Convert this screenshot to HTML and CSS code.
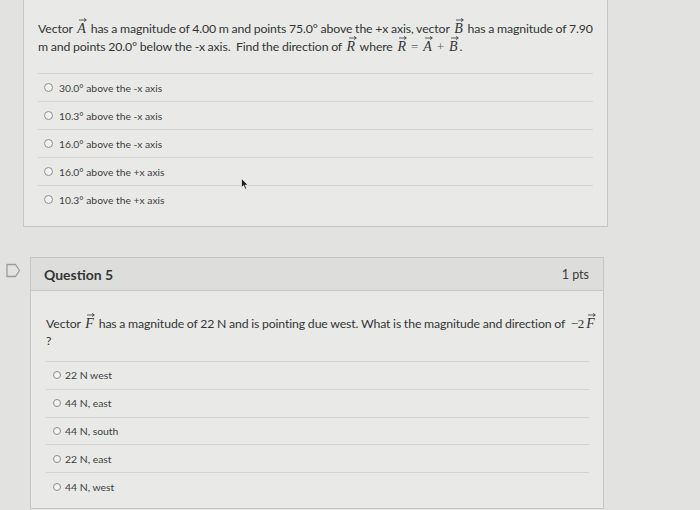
FILE: index.html
```html
<!DOCTYPE html>
<html lang="en">
<head>
<meta charset="utf-8">
<link rel="stylesheet" href="styles.css">
</head>
<body>
<div class="page">
  <div class="card card-prev">
    <p class="qtext">Vector <span class="vec">A<svg class="arr" viewBox="0 0 8 4"><path d="M0 2 H7 M5 0.4 L7.4 2 L5 3.6" fill="none" stroke="currentColor" stroke-width="0.8"/></svg></span> has a magnitude of 4.00 m and points 75.0° above the +x axis, vector <span class="vec">B<svg class="arr" viewBox="0 0 8 4"><path d="M0 2 H7 M5 0.4 L7.4 2 L5 3.6" fill="none" stroke="currentColor" stroke-width="0.8"/></svg></span> has a magnitude of 7.90 m and points 20.0° below the -x axis.&nbsp; Find the direction of <span class="vec">R<svg class="arr" viewBox="0 0 8 4"><path d="M0 2 H7 M5 0.4 L7.4 2 L5 3.6" fill="none" stroke="currentColor" stroke-width="0.8"/></svg></span> where <span class="vec">R<svg class="arr" viewBox="0 0 8 4"><path d="M0 2 H7 M5 0.4 L7.4 2 L5 3.6" fill="none" stroke="currentColor" stroke-width="0.8"/></svg></span><span class="op">=</span><span class="vec">A<svg class="arr" viewBox="0 0 8 4"><path d="M0 2 H7 M5 0.4 L7.4 2 L5 3.6" fill="none" stroke="currentColor" stroke-width="0.8"/></svg></span><span class="op">+</span><span class="vec">B<svg class="arr" viewBox="0 0 8 4"><path d="M0 2 H7 M5 0.4 L7.4 2 L5 3.6" fill="none" stroke="currentColor" stroke-width="0.8"/></svg></span>.</p>
    <ul class="answers a1">
      <li><span class="radio"></span>30.0° above the -x axis</li>
      <li><span class="radio"></span>10.3° above the -x axis</li>
      <li><span class="radio"></span>16.0° above the -x axis</li>
      <li><span class="radio"></span>16.0° above the +x axis</li>
      <li><span class="radio"></span>10.3° above the +x axis</li>
    </ul>
    <svg class="cursor" width="8" height="12" viewBox="0 0 8 12"><path d="M0.5 0.5 L0.5 9.5 L2.6 7.6 L4.2 11.2 L5.6 10.6 L4.1 7.1 L7 7 Z" fill="#222" stroke="#fff" stroke-width="0.6"/></svg>
  </div>

  <div class="q-row">
    <div class="flag-col">
      <svg class="flag" width="15" height="15" viewBox="0 0 15 15"><path d="M1 1.5 H9.5 L13.5 7.5 L9.5 13.5 H1 Z" fill="none" stroke="#9a9c9a" stroke-width="1.3" stroke-linejoin="round"/></svg>
    </div>
    <div class="card card-q">
      <div class="q-header">
        <span class="q-title">Question 5</span>
        <span class="q-pts">1 pts</span>
      </div>
      <div class="q-body">
        <p class="qtext">Vector <span class="vec">F<svg class="arr" viewBox="0 0 8 4"><path d="M0 2 H7 M5 0.4 L7.4 2 L5 3.6" fill="none" stroke="currentColor" stroke-width="0.8"/></svg></span> has a magnitude of 22 N and is pointing due west. What is the magnitude and direction of <span class="neg">−2</span><span class="vec">F<svg class="arr" viewBox="0 0 8 4"><path d="M0 2 H7 M5 0.4 L7.4 2 L5 3.6" fill="none" stroke="currentColor" stroke-width="0.8"/></svg></span><br>?</p>
        <ul class="answers a2">
          <li><span class="radio"></span>22 N west</li>
          <li><span class="radio"></span>44 N, east</li>
          <li><span class="radio"></span>44 N, south</li>
          <li><span class="radio"></span>22 N, east</li>
          <li><span class="radio"></span>44 N, west</li>
        </ul>
      </div>
    </div>
  </div>
</div>
</body>
</html>
```

FILE: styles.css
```css
html, body {
  margin: 0;
  padding: 0;
}
body {
  width: 700px;
  height: 510px;
  overflow: hidden;
  background: #e2e3e1;
  font-family: Lato, "Liberation Sans", sans-serif;
  color: #383a3a;
}
.page {
  display: flex;
  flex-direction: column;
}
.card {
  background: #e9eae8;
  border: 1px solid #c6c7c5;
  box-sizing: border-box;
}
.card-prev {
  position: relative;
  margin-left: 23px;
  width: 585px;
  height: 227px;
  border-top: none;
  padding: 20px 0 0 14px;
}
.qtext {
  margin: 0;
  font-size: 12.3px;
  letter-spacing: -0.12px;
  word-spacing: -0.3px;
  line-height: 18px;
  padding-right: 6px;
  color: #333535;
}
.vec {
  position: relative;
  font-family: "Liberation Serif", serif;
  font-style: italic;
  font-size: 14px;
  letter-spacing: 0;
  padding: 0 2px 0 2px;
}
.arr {
  position: absolute;
  left: 4px;
  top: -3px;
  width: 8px;
  height: 4px;
}
.op {
  font-family: "Liberation Serif", serif;
  font-size: 13px;
  padding: 0 3px;
  color: #666;
}
.neg {
  font-family: "Liberation Serif", serif;
  font-size: 13px;
  padding-left: 3px;
}
.answers {
  list-style: none;
  margin: 17px 14px 0 0;
  padding: 0;
}
.answers li {
  display: flex;
  align-items: center;
  border-top: 1px solid #d3d4d2;
  color: #3c3e3e;
}
.a1 li {
  height: 27px;
  font-size: 10.3px;
  padding-left: 6px;
}
.a1 .radio {
  width: 9px;
  height: 9px;
  margin-right: 6px;
}
.radio {
  box-sizing: border-box;
  border: 1px solid #8e908e;
  border-radius: 50%;
  background: #f2f3f1;
  flex: none;
}
.cursor {
  position: absolute;
  left: 217px;
  top: 178px;
}
.q-row {
  display: flex;
  margin-top: 30px;
  height: 260px;
}
.flag-col {
  width: 30px;
  flex: none;
  padding-top: 6px;
  box-sizing: border-box;
}
.flag {
  display: block;
  margin-left: 6px;
}
.card-q {
  width: 574px;
  height: 252px;
  overflow: hidden;
}
.q-header {
  display: flex;
  justify-content: space-between;
  align-items: center;
  height: 32px;
  background: #dddedc;
  border-bottom: 1px solid #c6c7c5;
  padding: 0 14px 0 13px;
}
.q-title {
  font-size: 14px;
  font-weight: 700;
  color: #333535;
}
.q-pts {
  font-size: 12.5px;
  color: #3a3c3c;
}
.q-body {
  padding: 24px 0 0 15px;
}
.q-body .qtext {
  font-size: 12.3px;
  line-height: 17px;
}
.a2 {
  margin-top: 12px;
}
.a2 li {
  height: 26.8px;
  font-size: 10.4px;
  padding-left: 7px;
}
.a2 .radio {
  width: 8px;
  height: 8px;
  margin-right: 4px;
}
```
